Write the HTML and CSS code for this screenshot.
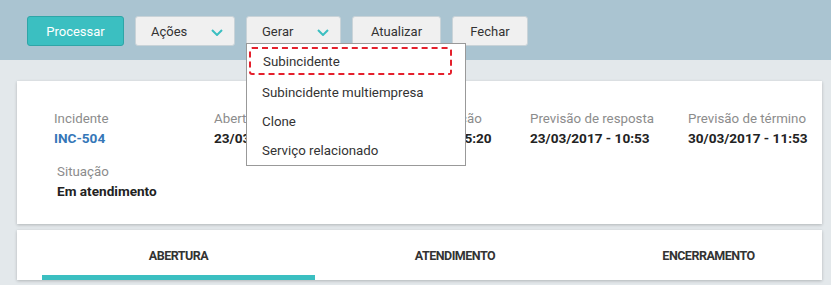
FILE: index.html
```html
<!DOCTYPE html>
<html lang="pt">
<head>
  <meta charset="UTF-8">
  <title>Incidente INC-504</title>
  <link rel="stylesheet" href="styles.css">
</head>
<body>
  <!-- Barra de ações -->
  <div class="toolbar">
    <button class="btn btn-primary">Processar</button>
    <div class="btn btn-drop">Ações
      <svg class="chev" width="12" height="7" viewBox="0 0 12 7"><polyline points="1,1 6,6 11,1" fill="none" stroke="#3bbfc1" stroke-width="2"/></svg>
    </div>
    <div class="drop-wrap">
      <div class="btn btn-drop btn-gerar">Gerar
        <svg class="chev" width="12" height="7" viewBox="0 0 12 7"><polyline points="1,1 6,6 11,1" fill="none" stroke="#3bbfc1" stroke-width="2"/></svg>
      </div>
      <ul class="menu">
        <li class="menu-item focused">Subincidente</li>
        <li class="menu-item first">Subincidente multiempresa</li>
        <li class="menu-item">Clone</li>
        <li class="menu-item">Serviço relacionado</li>
      </ul>
    </div>
    <button class="btn btn-atual">Atualizar</button>
    <button class="btn btn-fechar">Fechar</button>
  </div>

  <div class="content">
    <!-- Resumo do incidente -->
    <div class="card summary">
      <div class="fields">
        <div class="field wide">
          <div class="label">Incidente</div>
          <div class="value link">INC-504</div>
        </div>
        <div class="field">
          <div class="label">Abertura</div>
          <div class="value">23/03/2017 - 10:53</div>
        </div>
        <div class="field">
          <div class="label">Última atualização</div>
          <div class="value">23/03/2017 - 15:20</div>
        </div>
        <div class="field">
          <div class="label">Previsão de resposta</div>
          <div class="value">23/03/2017 - 10:53</div>
        </div>
        <div class="field">
          <div class="label">Previsão de término</div>
          <div class="value">30/03/2017 - 11:53</div>
        </div>
      </div>
      <div class="field situacao">
        <div class="label">Situação</div>
        <div class="value">Em atendimento</div>
      </div>
    </div>

    <!-- Abas -->
    <div class="card tabs">
      <div class="tab active"><span>ABERTURA</span></div>
      <div class="tab"><span>ATENDIMENTO</span></div>
      <div class="tab"><span>ENCERRAMENTO</span></div>
    </div>
  </div>
</body>
</html>
```

FILE: styles.css
```css
body {
  margin: 0;
  font-family: Roboto, "Liberation Sans", sans-serif;
  background-color: #e3e8eb;
  color: #222;
  height: 285px;
  overflow: hidden;
}
.toolbar {
  background-color: #aac4d1;
  height: 60px;
  box-sizing: border-box;
  padding: 16px 0 0 27px;
  display: flex;
  align-items: flex-start;
  gap: 11px;
}
.btn {
  height: 30px;
  box-sizing: border-box;
  border: 1px solid #c9d3d8;
  border-radius: 3px;
  background-color: #f0f0f0;
  font-family: Roboto, sans-serif;
  font-size: 13px;
  color: #333;
  padding: 0;
  display: flex;
  align-items: center;
  justify-content: center;
}
.btn-primary {
  width: 97px;
  background-color: #3bbfc1;
  border-color: #2fa5a7;
  color: #fff;
}
.btn-drop {
  width: 100px;
  justify-content: space-between;
  padding: 0 11px 0 15px;
}
.btn-gerar {
  width: 95px;
  padding-left: 15px;
}
.btn-atual { width: 89px; }
.btn-fechar { width: 76px; }
.chev {
  display: block;
  margin-top: 2px;
}
.drop-wrap {
  position: relative;
}
.menu {
  position: absolute;
  left: 0;
  top: 27px;
  width: 220px;
  box-sizing: border-box;
  margin: 0;
  padding: 3px 0 0 0;
  list-style: none;
  background-color: #fff;
  border: 1px solid #999;
  z-index: 5;
}
.menu-item {
  height: 29px;
  display: flex;
  align-items: center;
  padding-left: 15px;
  font-size: 13.3px;
  color: #333;
}
.menu-item.first { margin-top: 3px; }
.menu-item.focused {
  height: 28px;
  box-sizing: border-box;
  margin: 0 13px 0 2px;
  padding-left: 12px;
  border: 2px dashed #e4202c;
  border-radius: 3px;
}
.content {
  padding: 21px 9px 0 17px;
  display: flex;
  flex-direction: column;
  gap: 6px;
}
.card {
  background-color: #fff;
  box-shadow: 0 1px 3px rgba(0, 0, 0, 0.22);
}
.summary {
  height: 143px;
  box-sizing: border-box;
  padding: 29px 0 0 37px;
}
.fields {
  display: flex;
}
.field {
  width: 158px;
  flex-shrink: 0;
}
.field.wide { width: 160px; }
.label {
  font-size: 13.3px;
  color: #8c8c8c;
  line-height: 17px;
}
.value {
  font-size: 13.6px;
  font-weight: bold;
  color: #222;
  line-height: 17px;
  margin-top: 3px;
}
.value.link { color: #3577b8; }
.situacao {
  margin: 16px 0 0 3px;
}
.tabs {
  height: 50px;
  display: grid;
  grid-template-columns: 273px 280px 1fr;
  padding-left: 25px;
}
.tab {
  display: flex;
  align-items: center;
  justify-content: center;
  box-sizing: border-box;
  padding-top: 1px;
}
.tab span {
  font-size: 12.5px;
  font-weight: bold;
  letter-spacing: -0.5px;
  color: #333;
}
.tab.active {
  border-bottom: 5px solid #3bbfc1;
  padding-top: 6px;
}
```
